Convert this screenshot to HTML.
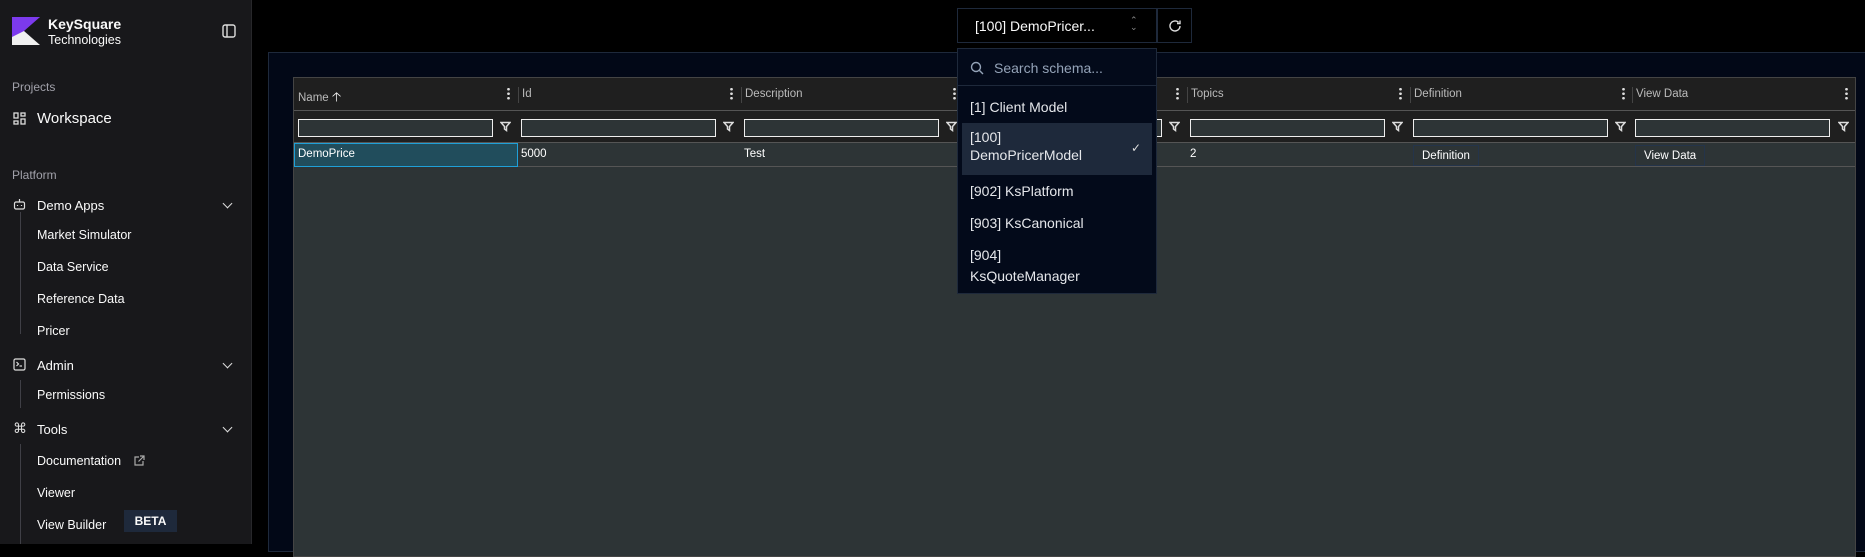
<!DOCTYPE html>
<html><head><meta charset="utf-8"><style>
*{box-sizing:border-box;margin:0;padding:0}
body{width:1865px;height:544px;background:#000;font-family:"Liberation Sans",sans-serif;color:#fafafa;position:relative;overflow:hidden}
.abs{position:absolute}
#side{left:0;top:0;width:252px;height:544px;background:#18181b;border-right:1px solid #27272a}
.lbl{font-size:12px;color:#a1a1aa}
.it{font-size:13px;color:#fafafa;left:37px}
.sub{font-size:12.5px;color:#fafafa;left:37px}
.chev{left:224px;width:7px;height:7px;border-right:1.5px solid #ddd;border-bottom:1.5px solid #ddd;transform:rotate(45deg)}
.vl{left:20px;width:1px;background:#3f3f46}
#panel{left:268px;top:52px;width:1600px;height:500px;background:#020817;border:1px solid #1e293b}
#grid{left:293px;top:77px;width:1563px;height:480px;background:#2d3436;border:1px solid #444;font-size:12px}
.hdr{left:0;top:0;width:100%;height:33px;background:#1f1f1f;border-bottom:1px solid #555}
.frow{left:0;top:33px;width:100%;height:32px;background:#1f1f1f;border-bottom:1px solid #555}
.row{left:0;top:65px;width:100%;height:24px;border-bottom:1px solid #555}
.hc{top:10px;color:#bbb;font-size:11.5px}
.dots{top:9px;width:3px;height:13px;background:radial-gradient(circle,#ddd 1.2px,transparent 1.5px) 0 0/3px 4.5px}
.sep{top:9px;width:1px;height:16px;background:#444}
.fi{top:8px;height:18px;border:1px solid #eee;background:#2d3436}
.fic{top:10px}
.cell{top:5px;color:#fff;font-size:11.5px}
.btn{top:2px;height:21px;border:1px solid #24344a;background:#2d3436;padding:4px 8px;font-size:11.5px;color:#fff}
#dd{left:957px;top:48px;width:200px;height:246px;background:#030a1a;border:1px solid #1e293b;font-size:14px}
.di{left:12px;color:#e5e7eb}
</style></head><body>
<div id="side" class="abs">
<svg class="abs" style="left:12px;top:17px" width="28" height="28" viewBox="0 0 28 28"><polygon points="0,0 28,0 0,20" fill="#7c3aed"/><polygon points="0,0 0,28 28,28 12,14" fill="#f0f0f0"/><polygon points="0,0 28,0 12,14 0,20" fill="#7c3aed"/></svg>
<div class="abs" style="left:48px;top:16px;font-size:14px;font-weight:bold">KeySquare</div>
<div class="abs" style="left:48px;top:33px;font-size:12.5px">Technologies</div>
<svg class="abs" style="left:222px;top:24px" width="14" height="14" viewBox="0 0 14 14" fill="none" stroke="#ddd" stroke-width="1.4"><rect x="1" y="1" width="12" height="12" rx="2"/><line x1="5" y1="1" x2="5" y2="13"/></svg>
<div class="abs lbl" style="left:12px;top:80px">Projects</div>
<svg class="abs" style="left:13px;top:112px" width="13" height="13" viewBox="0 0 13 13" fill="none" stroke="#ddd" stroke-width="1.3"><rect x="1" y="1" width="4" height="5"/><rect x="8" y="1" width="4" height="3"/><rect x="1" y="9" width="4" height="3"/><rect x="8" y="7" width="4" height="5"/></svg>
<div class="abs" style="left:37px;top:110px;font-size:15px">Workspace</div>
<div class="abs lbl" style="left:12px;top:168px">Platform</div>
<svg class="abs" style="left:13px;top:198px" width="13" height="13" viewBox="0 0 13 13" fill="none" stroke="#ddd" stroke-width="1.2"><rect x="1.5" y="4" width="10" height="7" rx="1.5"/><line x1="6.5" y1="1" x2="6.5" y2="4"/><line x1="4.5" y1="7" x2="4.5" y2="8"/><line x1="8.5" y1="7" x2="8.5" y2="8"/></svg>
<div class="abs it" style="top:198px">Demo Apps</div><div class="abs chev" style="top:200px"></div>
<div class="abs vl" style="top:212px;height:122px"></div>
<div class="abs sub" style="top:228px">Market Simulator</div>
<div class="abs sub" style="top:260px">Data Service</div>
<div class="abs sub" style="top:292px">Reference Data</div>
<div class="abs sub" style="top:324px">Pricer</div>
<svg class="abs" style="left:13px;top:358px" width="13" height="13" viewBox="0 0 13 13" fill="none" stroke="#ddd" stroke-width="1.2"><rect x="1" y="1" width="11" height="11" rx="1.5"/><polyline points="3.5,4 5.5,6 3.5,8"/><line x1="6.5" y1="8" x2="9" y2="8"/></svg>
<div class="abs it" style="top:358px">Admin</div><div class="abs chev" style="top:360px"></div>
<div class="abs vl" style="top:380px;height:28px"></div>
<div class="abs sub" style="top:388px">Permissions</div>
<div class="abs" style="left:13px;top:420px;font-size:14px;color:#ddd">⌘</div>
<div class="abs it" style="top:422px">Tools</div><div class="abs chev" style="top:424px"></div>
<div class="abs vl" style="top:444px;height:100px"></div>
<div class="abs sub" style="top:454px">Documentation</div>
<svg class="abs" style="left:133px;top:455px" width="12" height="12" viewBox="0 0 12 12" fill="none" stroke="#aaa" stroke-width="1.2"><path d="M6 2H2v8h8V6M7 1h4v4M11 1L5.5 6.5"/></svg>
<div class="abs sub" style="top:486px">Viewer</div>
<div class="abs sub" style="top:518px">View Builder</div>
<div class="abs" style="left:124px;top:510px;width:53px;height:22px;background:#1e293b;font-size:12px;font-weight:bold;text-align:center;line-height:22px">BETA</div>
</div>

<div id="panel" class="abs"></div>
<div id="grid" class="abs">
<div class="abs hdr">
<div class="abs hc" style="left:4px">Name <span style="font-size:13px;color:#eee">&#129121;</span></div><div class="abs dots" style="left:213px"></div><div class="abs sep" style="left:224px"></div>
<div class="abs hc" style="left:228px">Id</div><div class="abs dots" style="left:436px"></div><div class="abs sep" style="left:447px"></div>
<div class="abs hc" style="left:451px">Description</div><div class="abs dots" style="left:659px"></div><div class="abs sep" style="left:670px"></div>
<div class="abs dots" style="left:882px"></div><div class="abs sep" style="left:893px"></div>
<div class="abs hc" style="left:897px">Topics</div><div class="abs dots" style="left:1105px"></div><div class="abs sep" style="left:1116px"></div>
<div class="abs hc" style="left:1120px">Definition</div><div class="abs dots" style="left:1328px"></div><div class="abs sep" style="left:1338px"></div>
<div class="abs hc" style="left:1342px">View Data</div><div class="abs dots" style="left:1551px"></div>
</div>
<div class="abs frow">
<div class="abs fi" style="left:4px;width:195px"></div><svg class="abs fic" style="left:206px" width="11" height="11" viewBox="0 0 11 11" fill="none" stroke="#ddd" stroke-width="1.5"><path d="M1 1.5h9L6.5 5.5V9.5L4.5 8V5.5z"/></svg>
<div class="abs fi" style="left:227px;width:195px"></div><svg class="abs fic" style="left:429px" width="11" height="11" viewBox="0 0 11 11" fill="none" stroke="#ddd" stroke-width="1.5"><path d="M1 1.5h9L6.5 5.5V9.5L4.5 8V5.5z"/></svg>
<div class="abs fi" style="left:450px;width:195px"></div><svg class="abs fic" style="left:652px" width="11" height="11" viewBox="0 0 11 11" fill="none" stroke="#ddd" stroke-width="1.5"><path d="M1 1.5h9L6.5 5.5V9.5L4.5 8V5.5z"/></svg>
<div class="abs fi" style="left:673px;width:195px"></div><svg class="abs fic" style="left:875px" width="11" height="11" viewBox="0 0 11 11" fill="none" stroke="#ddd" stroke-width="1.5"><path d="M1 1.5h9L6.5 5.5V9.5L4.5 8V5.5z"/></svg>
<div class="abs fi" style="left:896px;width:195px"></div><svg class="abs fic" style="left:1098px" width="11" height="11" viewBox="0 0 11 11" fill="none" stroke="#ddd" stroke-width="1.5"><path d="M1 1.5h9L6.5 5.5V9.5L4.5 8V5.5z"/></svg>
<div class="abs fi" style="left:1119px;width:195px"></div><svg class="abs fic" style="left:1321px" width="11" height="11" viewBox="0 0 11 11" fill="none" stroke="#ddd" stroke-width="1.5"><path d="M1 1.5h9L6.5 5.5V9.5L4.5 8V5.5z"/></svg>
<div class="abs fi" style="left:1341px;width:195px"></div><svg class="abs fic" style="left:1544px" width="11" height="11" viewBox="0 0 11 11" fill="none" stroke="#ddd" stroke-width="1.5"><path d="M1 1.5h9L6.5 5.5V9.5L4.5 8V5.5z"/></svg>
</div>
<div class="abs row">
<div class="abs" style="left:0;top:0;width:224px;height:24px;background:#214d5c;border:1px solid #1fa0d8"></div>
<div class="abs cell" style="left:4px">DemoPrice</div>
<div class="abs cell" style="left:227px">5000</div>
<div class="abs cell" style="left:450px">Test</div>
<div class="abs cell" style="left:896px">2</div>
<div class="abs btn" style="left:1119px">Definition</div>
<div class="abs btn" style="left:1341px">View Data</div>
</div>
</div>

<div class="abs" style="left:957px;top:8px;width:200px;height:35px;border:1px solid #1e293b;background:#000;font-size:14px;padding:9px 0 0 17px">[100] DemoPricer...<span style="position:absolute;left:172px;top:8px;font-size:9px;color:#888;line-height:7px">&#8963;<br>&#8964;</span></div>
<div class="abs" style="left:1157px;top:8px;width:35px;height:35px;border:1px solid #1e293b"><svg style="position:absolute;left:10px;top:10px" width="14" height="14" viewBox="0 0 14 14" fill="none" stroke="#ddd" stroke-width="1.4"><path d="M12 7a5 5 0 1 1-1.5-3.6M12 1.5v3h-3"/></svg></div>
<div id="dd" class="abs">
<svg class="abs" style="left:12px;top:12px" width="14" height="14" viewBox="0 0 14 14" fill="none" stroke="#94a3b8" stroke-width="1.4"><circle cx="6" cy="6" r="4.5"/><line x1="9.5" y1="9.5" x2="13" y2="13"/></svg>
<div class="abs" style="left:36px;top:11px;color:#94a3b8">Search schema...</div>
<div class="abs" style="left:0;top:36px;width:198px;height:1px;background:#1e293b"></div>
<div class="abs di" style="top:50px">[1] Client Model</div>
<div class="abs" style="left:4px;top:74px;width:190px;height:52px;background:#1e293b"></div>
<div class="abs di" style="top:79px;line-height:18px">[100]<br>DemoPricerModel</div>
<div class="abs" style="left:173px;top:92px;font-size:12px;color:#ddd">&#10003;</div>
<div class="abs di" style="top:134px">[902] KsPlatform</div>
<div class="abs di" style="top:166px">[903] KsCanonical</div>
<div class="abs di" style="top:196px;line-height:21px">[904]<br>KsQuoteManager</div>
</div>
</body></html>
